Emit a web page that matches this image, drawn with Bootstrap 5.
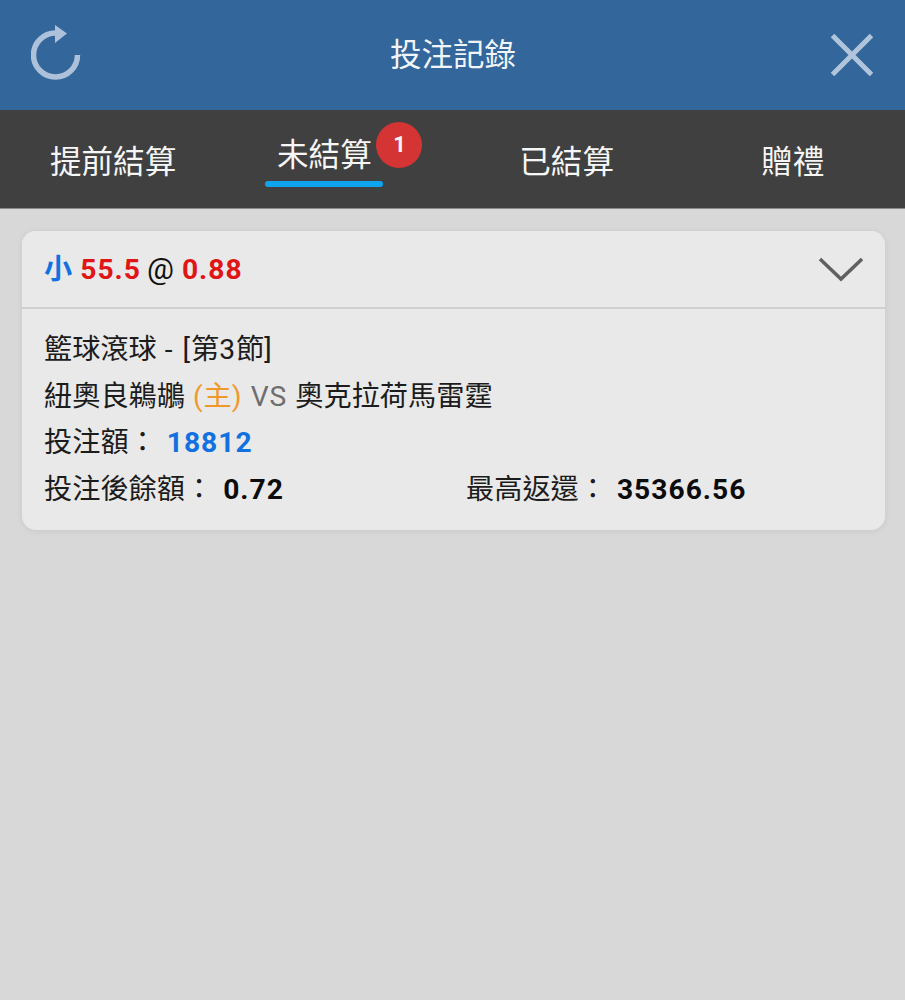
<!DOCTYPE html>
<html lang="zh-Hant">
<head>
    <meta charset="UTF-8">
    <meta name="viewport" content="width=device-width, initial-scale=1">
    <title>投注記錄</title>
    <link rel="stylesheet" href="https://cdn.jsdelivr.net/npm/bootstrap@5.3.0/dist/css/bootstrap.min.css">
    <style>
        body { background: #d8d8d8; min-height: 1000px; font-family: Roboto, "Noto Sans CJK TC", sans-serif; color: #1c1c1c; }
        .top-bar { height: 110px; background: #33669a; padding: 0 32px 0 31px; }
        .top-icon { width: 50px; }
        .top-title { color: #f2f5f8; font-size: 31.5px; line-height: 1; padding: 1px 0 0 2px; }
        .tab-bar { height: 99px; background: #404040; border-bottom: 1px solid #8c8c8c; }
        .tab-cell { color: #f6f6f6; font-size: 31.6px; line-height: 1; padding-top: 37px; }
        .tab-cell-on { padding-top: 30px; }
        .tab-right { padding-left: 2px; }
        .tab-active { position: relative; margin-right: 30px; padding: 0 11.5px 15.5px; align-self: flex-start; }
        .tab-active::after { content: ""; position: absolute; left: 0; right: 0; bottom: 0; height: 6px; border-radius: 3px; background: #0ea5ee; }
        .tab-count { position: absolute; top: -18px; left: 111px; width: 46px; height: 46px; border-radius: 50%; background: #d43434; color: #f4f4f4; font-size: 22px; font-weight: 700; }
        .bet-list { padding: 22px 20px 0 22px; }
        .bet-card { background: #e9e9e9; border: 0; border-radius: 14px; box-shadow: 0 1px 6px rgba(0, 0, 0, .08); overflow: hidden; }
        .bet-head { background: #e9e9e9; height: 78px; padding: 0 22px; border-bottom: 2px solid #cfcfcf; font-size: 28.2px; font-weight: 700; line-height: 1; word-spacing: 1px; }
        .bet-body { padding: 18px 22px 17px; font-size: 28.2px; line-height: 46.5px; word-spacing: 3px; }
        .bet-line { word-spacing: 1px; }
        .lat { letter-spacing: 1px; }
        .c-blue { color: #1271e0; }
        .c-red { color: #e01515; }
        .c-at { color: #111; font-weight: 400; font-size: 30px; margin-left: -2px; }
        .c-home { color: #f0992b; }
        .c-vs { color: #6e6e6e; }
        .c-strong { color: #0c0c0c; font-weight: 700; }
        .half-left { width: 422px; }
    </style>
</head>
<body>
    <!-- Title bar -->
    <div class="top-bar d-flex align-items-center justify-content-between">
        <svg class="top-icon" height="60" viewBox="0 0 50 60">
            <path d="M24.500 8A22 22 0 1 0 46.500 30" fill="none" stroke="#adc2da" stroke-width="5.500"/>
            <path d="M24 0L36 8.500 24 18Z" fill="#adc2da"/>
        </svg>
        <div class="top-title">投注記錄</div>
        <svg class="top-icon" height="42" viewBox="0 0 50 42">
            <path d="M9.500 1.500L48.500 40.500M48.500 1.500L9.500 40.500" stroke="#b0c5dc" stroke-width="5"/>
        </svg>
    </div>

    <!-- Tabs -->
    <div class="tab-bar row g-0 text-center">
        <div class="col-3 tab-cell">提前結算</div>
        <div class="col-3 tab-cell tab-cell-on d-flex justify-content-center">
            <div class="tab-active">未結算
                <span class="tab-count d-flex align-items-center justify-content-center">1</span>
            </div>
        </div>
        <div class="col-3 tab-cell tab-right">已結算</div>
        <div class="col-3 tab-cell tab-right">贈禮</div>
    </div>

    <!-- Bet list -->
    <div class="bet-list">
        <div class="card bet-card">
            <div class="card-header bet-head d-flex align-items-center justify-content-between">
                <div><span class="c-blue">小</span> <span class="c-red lat">55.5</span> <span class="c-at">@</span> <span class="c-red lat">0.88</span></div>
                <svg width="46" height="26" viewBox="0 0 46 26">
                    <path d="M3 3L24 23 45 3" fill="none" stroke="#606060" stroke-width="3.500"/>
                </svg>
            </div>
            <div class="card-body bet-body">
                <div class="bet-line">籃球滾球 <span class="lat">- [</span>第<span class="lat">3</span>節<span class="lat">]</span></div>
                <div class="bet-line">紐奧良鵜鶘 <span class="c-home"><span class="lat">(</span>主<span class="lat">)</span></span> <span class="c-vs lat">VS</span> 奧克拉荷馬雷霆</div>
                <div>投注額： <span class="c-blue fw-bold lat">18812</span></div>
                <div class="d-flex">
                    <div class="half-left">投注後餘額： <span class="c-strong lat">0.72</span></div>
                    <div>最高返還： <span class="c-strong lat">35366.56</span></div>
                </div>
            </div>
        </div>
    </div>

    <script src="https://cdn.jsdelivr.net/npm/bootstrap@5.3.0/dist/js/bootstrap.bundle.min.js"></script>
</body>
</html>
